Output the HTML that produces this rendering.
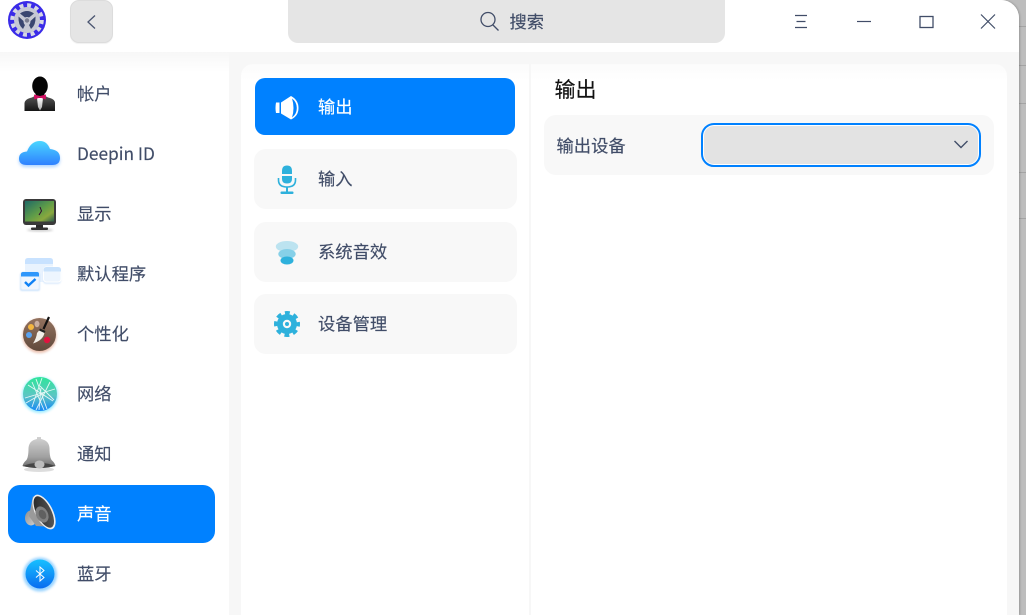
<!DOCTYPE html>
<html lang="zh"><head><meta charset="utf-8"><title>声音</title>
<style>
*{box-sizing:border-box;margin:0;padding:0}
html,body{width:1026px;height:615px;overflow:hidden;background:#bdbdbd}
body{position:relative;font-family:"Noto Sans CJK SC","Liberation Sans",sans-serif;color:#414d68;font-size:17.3px;-webkit-text-stroke:.15px currentColor}
.a{position:absolute}
.t{position:absolute;line-height:24px;white-space:nowrap}
.ln{position:absolute;left:1019px;width:7px;height:1px;background:#a4a4a4}
#win{position:absolute;left:0;top:0;width:1019px;height:615px;background:#f7f7f7;border-top-right-radius:18px;overflow:hidden;box-shadow:1px 0 2px rgba(0,0,0,.2)}
svg{position:absolute;overflow:visible}
.card{position:absolute;background:#f8f8f8;border-radius:12px}
</style></head><body>
<div class="ln" style="top:26px"></div><div class="ln" style="top:65px"></div><div class="ln" style="top:103px"></div><div class="ln" style="top:172px"></div><div class="ln" style="top:218px"></div>
<div id="win">
<div class="a" style="left:0;top:0;width:1019px;height:52px;background:#fff"></div>
<div class="a" style="left:0;top:52px;width:229px;height:563px;background:linear-gradient(#f7f7f7,#fff 20px,#fff)"></div>
<div class="a" style="left:241px;top:64px;width:288px;height:551px;background:linear-gradient(#fbfbfb,#fff 16px);border-radius:12px 0 0 0"></div>
<div class="a" style="left:531px;top:64px;width:476px;height:551px;background:linear-gradient(#fbfbfb,#fff 16px);border-radius:0 12px 0 0"></div>

<!-- app logo -->
<svg style="left:8px;top:1px" width="38" height="38" viewBox="0 0 38 38">
<circle cx="19" cy="19" r="19" fill="#3a2be8"/>
<circle cx="19" cy="19" r="14.8" fill="none" stroke="#d6d7e4" stroke-width="4" stroke-dasharray="4 3.75"/>
<circle cx="19" cy="19" r="13" fill="#c6c8d4"/>
<path d="M12 12.5Q19 7.5 26 12.5L21 16.5Q19 15.5 17 16.5Z" fill="#3a4670"/>
<path d="M10.5 15.5L15.5 20Q15.5 22.5 17 24L15 28Q10 24 10.5 15.5Z" fill="#3a4670"/>
<path d="M27.5 15.5L22.5 20Q22.5 22.5 21 24L23 28Q28 24 27.5 15.5Z" fill="#3a4670"/>
<circle cx="19" cy="19.5" r="2.2" fill="#7a7d90"/>
</svg>

<!-- back -->
<div class="a" style="left:70px;top:0;width:43px;height:43px;background:#e5e5e5;border:1px solid #dcdcdc;border-radius:9px;box-shadow:0 1px 1px rgba(0,0,0,.06)"></div>
<svg style="left:69.5px;top:0" width="43" height="43" fill="none" stroke="#4a5570" stroke-width="1.3"><path d="M25 15.5L18 22L25 28.5"/></svg>

<!-- search -->
<div class="a" style="left:288px;top:-10px;width:437px;height:53px;background:#e5e5e5;border-radius:10px"></div>
<svg style="left:477.5px;top:10px" width="24" height="24" fill="none" stroke="#414d68" stroke-width="1.3"><circle cx="10" cy="9.5" r="7"/><path d="M15 15L20.5 20.5"/></svg>
<div class="t" style="left:509.5px;top:9px">搜索</div>

<!-- window buttons -->
<svg style="left:780px;top:0" width="230" height="44" fill="none" stroke="#414d68" stroke-width="1.2">
<path d="M15 15.5H27M16.5 21.5H25.5M15 27.5H27"/>
<path d="M77 21.5H91"/>
<rect x="140" y="16.5" width="13" height="11" stroke-width="1.3"/>
<path d="M201 14.5L215 28.5M215 14.5L201 28.5"/>
</svg>

<!-- sidebar -->
<div class="a" style="left:8px;top:485px;width:207px;height:58px;background:#0081ff;border-radius:12px"></div>
<div class="t" style="left:77px;top:81px">帐户</div>
<div class="t" style="left:77px;top:141px">Deepin ID</div>
<div class="t" style="left:77px;top:201px">显示</div>
<div class="t" style="left:77px;top:261px">默认程序</div>
<div class="t" style="left:77px;top:321px">个性化</div>
<div class="t" style="left:77px;top:381px">网络</div>
<div class="t" style="left:77px;top:441px">通知</div>
<div class="t" style="left:77px;top:501px;color:#fff">声音</div>
<div class="t" style="left:77px;top:561px">蓝牙</div>

<!-- account -->
<svg style="left:20px;top:74px" width="40" height="40" viewBox="0 0 40 40">
<defs><linearGradient id="su" x1="0" y1="0" x2="0" y2="1"><stop offset="0" stop-color="#5a5a5a"/><stop offset="1" stop-color="#151515"/></linearGradient>
<linearGradient id="sh" x1="0" y1="0" x2="0" y2="1"><stop offset="0" stop-color="#fff"/><stop offset="1" stop-color="#aaa"/></linearGradient></defs>
<path d="M4.5 37V29Q5 25.5 10 24Q14 23 15.5 21H24.5Q26 23 30 24Q35 25.5 35 29V37Z" fill="url(#su)"/>
<ellipse cx="20" cy="12" rx="7.8" ry="9.5" fill="#050505"/><path d="M15 16H25L24 23H16Z" fill="#050505"/>
<path d="M17 24H23L22 33L20 36.5L18 33Z" fill="url(#sh)"/>
<path d="M14 20.5L20 22L26 20.5L25.7 25.5L20 23.5L14.3 25.5Z" fill="#d40e62"/>
</svg>
<!-- cloud -->
<svg style="left:16px;top:136px" width="48" height="36" viewBox="0 0 48 36">
<defs><linearGradient id="cl" x1="0" y1="0" x2="0" y2="1"><stop offset="0" stop-color="#4ad6ff"/><stop offset="1" stop-color="#2f80ff"/></linearGradient>
<filter id="bl"><feGaussianBlur stdDeviation="1.5"/></filter></defs>
<path d="M11 29Q3 29 3 22.5Q3 16 11 15.5Q15 5 24 5Q31 5 34 13Q44 14 44 22Q44 29 36 29Z" fill="#5fa8ff" opacity=".5" filter="url(#bl)" transform="translate(0 2)"/>
<path d="M11 29Q3 29 3 22.5Q3 16 11 15.5Q15 5 24 5Q31 5 34 13Q44 14 44 22Q44 29 36 29Z" fill="url(#cl)"/>
</svg>
<!-- display -->
<svg style="left:20px;top:194px" width="40" height="40" viewBox="0 0 40 40">
<defs><linearGradient id="sc" x1="0" y1="0" x2="1" y2="1"><stop offset="0" stop-color="#1f6a66"/><stop offset=".5" stop-color="#5f9c48"/><stop offset=".75" stop-color="#8aa83e"/><stop offset="1" stop-color="#2c5c4c"/></linearGradient>
<filter id="bs"><feGaussianBlur stdDeviation="1"/></filter></defs>
<ellipse cx="20" cy="36" rx="13" ry="2" fill="#999" opacity=".4" filter="url(#bs)"/>
<rect x="3" y="5" width="33" height="26" rx="3" fill="#3a3a3a"/>
<rect x="5" y="7" width="29" height="20.5" fill="url(#sc)"/>
<path d="M20 13L21.5 17L19 21" stroke="#301030" stroke-width="1" fill="none"/>
<rect x="16" y="31" width="7" height="3" fill="#2b2b2b"/><rect x="11" y="33.5" width="17" height="2.5" rx="1" fill="#333"/>
</svg>
<!-- default apps -->
<svg style="left:18px;top:256px" width="44" height="40" viewBox="0 0 44 40">
<defs><filter id="bd"><feGaussianBlur stdDeviation=".8"/></filter></defs>
<rect x="7" y="2" width="28" height="24" rx="3" fill="#e9f3fe"/><path d="M7 8V5Q7 2 10 2H32Q35 2 35 5V8Z" fill="#c8e2ff"/>
<rect x="25" y="12" width="18" height="16" rx="3" fill="#cfe3fb" opacity=".7" filter="url(#bd)"/>
<rect x="25.5" y="11" width="17.5" height="15" rx="3" fill="#edf5fe" stroke="#fff"/><path d="M25.5 15.5V14Q25.5 11 28.5 11H40Q43 11 43 14V15.5Z" fill="#c9e2fc"/>
<rect x="2" y="17" width="20" height="18" rx="2" fill="#b9d9fb" opacity=".7" filter="url(#bd)"/>
<rect x="3" y="16" width="18" height="17.5" rx="2" fill="#f0f6fe" stroke="#e2eefc"/><path d="M3 20.5V18Q3 16 5 16H19Q21 16 21 18V20.5Z" fill="#2f97fb"/>
<path d="M7 26L10.5 29.5L17.5 23" stroke="#0f81f5" stroke-width="2.4" fill="none"/>
</svg>
<!-- personalize -->
<svg style="left:20px;top:314px" width="40" height="42" viewBox="0 0 40 42">
<defs><linearGradient id="pl" x1="0" y1="0" x2="0" y2="1"><stop offset="0" stop-color="#93725f"/><stop offset="1" stop-color="#614a3c"/></linearGradient>
<filter id="bp"><feGaussianBlur stdDeviation="1.2"/></filter></defs>
<circle cx="19.5" cy="22" r="17" fill="#d98a6a" opacity=".55" filter="url(#bp)"/>
<circle cx="19.5" cy="20.5" r="16.5" fill="url(#pl)"/>
<circle cx="11" cy="13" r="3" fill="#f4b63f"/><ellipse cx="17" cy="10" rx="2.5" ry="3.2" fill="#c9ad9f"/><circle cx="9" cy="21" r="3" fill="#5aa2ef"/><circle cx="27" cy="26" r="3.2" fill="#e0133f"/>
<path d="M29 3L23.5 15" stroke="#111" stroke-width="2.2"/>
<path d="M19.5 16L24.5 18.5Q23.5 26 13 29.5Q16.5 24 17 19Z" fill="#f2efe9"/>
<path d="M20 14.5L25.5 17L24.5 19L19 16.5Z" fill="#222"/>
</svg>
<!-- network -->
<svg style="left:20px;top:374px" width="40" height="40" viewBox="0 0 40 40">
<defs><linearGradient id="nw" x1="0" y1="0" x2="0" y2="1"><stop offset="0" stop-color="#2fe59a"/><stop offset=".55" stop-color="#5cc6c4"/><stop offset="1" stop-color="#1688f5"/></linearGradient>
<filter id="bn"><feGaussianBlur stdDeviation="1.2"/></filter></defs>
<circle cx="20" cy="21" r="18" fill="#5fe0ff" opacity=".6" filter="url(#bn)"/>
<circle cx="20" cy="20" r="17" fill="url(#nw)"/>
<g stroke="#fff" stroke-width=".9" fill="none" opacity=".85"><path d="M16 5L27 35M8 11L33 27M22 4L12 33M5 24L35 15M30 8L16 36M20 12L34 26M12 8L24 36M21 14L19 36M25 18L6 29"/></g>
</svg>
<!-- bell -->
<svg style="left:20px;top:434px" width="40" height="40" viewBox="0 0 40 40">
<defs><linearGradient id="bel" x1="0" y1="0" x2="0" y2="1"><stop offset="0" stop-color="#d2d2d2"/><stop offset=".65" stop-color="#a0a0a0"/><stop offset="1" stop-color="#6a6a6a"/></linearGradient></defs>
<ellipse cx="19" cy="35.5" rx="15" ry="2.5" fill="#bbb" opacity=".5"/>
<path d="M2.5 32Q3.5 28.5 6 26.5Q8.5 24 8.5 14Q9 6.5 17 5V3H21V5Q29 6.5 29.5 14Q29.5 24 32 26.5Q34.5 28.5 35.5 32Q19 36 2.5 32Z" fill="url(#bel)"/>
<path d="M2.5 32Q19 25.5 35.5 32Q19 36 2.5 32Z" fill="#464646"/>
<ellipse cx="19.5" cy="30.5" rx="5" ry="4" fill="#bdbdbd"/>
</svg>
<!-- speaker -->
<svg style="left:20px;top:492px" width="40" height="44" viewBox="0 0 40 44">
<defs><linearGradient id="sp" x1="0" y1="0" x2="1" y2="1"><stop offset="0" stop-color="#222"/><stop offset="1" stop-color="#5e5e5e"/></linearGradient>
<linearGradient id="sb" x1="0" y1="0" x2="1" y2="1"><stop offset="0" stop-color="#8e8e8e"/><stop offset="1" stop-color="#d4d4d4"/></linearGradient></defs>
<ellipse cx="11" cy="26" rx="6" ry="7.5" fill="url(#sb)"/>
<path d="M13 4L9 24L16 34L34 35Z" fill="#9a9a9a"/>
<ellipse cx="24" cy="20" rx="8.8" ry="19" transform="rotate(-27 24 20)" fill="#eee"/>
<ellipse cx="23.8" cy="20" rx="7.4" ry="17.2" transform="rotate(-27 23.8 20)" fill="url(#sp)"/>
<ellipse cx="22" cy="22.5" rx="6" ry="8.5" transform="rotate(-27 22 22.5)" fill="#808080"/>
<ellipse cx="22.5" cy="22.5" rx="3.5" ry="5" transform="rotate(-27 22.5 22.5)" fill="#606060"/>
</svg>
<!-- bluetooth -->
<svg style="left:20px;top:554px" width="40" height="40" viewBox="0 0 40 40">
<defs><linearGradient id="bt" x1="0" y1="0" x2="0" y2="1"><stop offset="0" stop-color="#17c0ff"/><stop offset="1" stop-color="#0a6cf0"/></linearGradient>
<filter id="bb"><feGaussianBlur stdDeviation="1.4"/></filter></defs>
<circle cx="20" cy="20.5" r="17" fill="#59b8ff" opacity=".6" filter="url(#bb)"/>
<circle cx="20" cy="20" r="14.5" fill="url(#bt)"/>
<path d="M16 16.5L24 23.5L20 27V13L24 16.5L16 23.5" fill="none" stroke="#fff" stroke-width="1"/>
</svg>

<!-- middle list -->
<div class="a" style="left:255px;top:78px;width:260px;height:57px;background:#0081ff;border-radius:10px"></div>
<div class="card" style="left:254px;top:149px;width:263px;height:60px"></div>
<div class="card" style="left:254px;top:222px;width:263px;height:60px"></div>
<div class="card" style="left:254px;top:294px;width:263px;height:60px"></div>
<div class="t" style="left:318px;top:94px;color:#fff">输出</div>
<div class="t" style="left:318px;top:166px">输入</div>
<div class="t" style="left:318px;top:239px">系统音效</div>
<div class="t" style="left:318px;top:311px">设备管理</div>

<svg style="left:273px;top:94px" width="28" height="28" viewBox="0 0 28 28">
<path d="M3 8.5H6.5V19H3Q2 14 3 8.5Z" fill="#fff"/>
<path d="M8 8.5L18 2Q25.5 6 25.5 14Q25.5 22 18 25.5L8 19.5Z" fill="#fff"/>
<path d="M19 4.5Q23.8 8 23.8 14Q23.8 20 19 23.5Q20.5 19 20.5 14Q20.5 9 19 4.5Z" fill="#0081ff"/>
</svg>
<svg style="left:275px;top:164px" width="24" height="32" viewBox="0 0 24 32" fill="#2eb1dc">
<path d="M7 7Q7 1.5 12 1.5Q17 1.5 17 7V10H7ZM7 12H17V15Q17 19.5 12 19.5Q7 19.5 7 15Z"/>
<path d="M3.5 14V16Q3.5 23 12 23Q20.5 23 20.5 16V14" fill="none" stroke="#2eb1dc" stroke-width="1.6"/>
<rect x="11" y="23" width="2" height="5"/><rect x="5.5" y="27.5" width="13" height="2.5" rx="1"/>
</svg>
<svg style="left:275px;top:240px" width="24" height="26" viewBox="0 0 24 26">
<ellipse cx="12" cy="6.5" rx="11.2" ry="5.5" fill="#bce3f0"/>
<ellipse cx="12" cy="14" rx="8.7" ry="5" fill="#86d0e8"/>
<ellipse cx="12" cy="20.5" rx="6.5" ry="4" fill="#2eb1dc"/>
</svg>
<svg style="left:274px;top:311px" width="26" height="26" viewBox="0 0 26 26">
<circle cx="13" cy="13" r="10" fill="#2eb1dc"/>
<circle cx="13" cy="13" r="11" fill="none" stroke="#2eb1dc" stroke-width="4" stroke-dasharray="4.8 3.84" stroke-dashoffset="2.4"/>
<circle cx="13" cy="13" r="4.2" fill="#f8f8f8"/>
<circle cx="13" cy="13" r="2" fill="#2eb1dc"/>
</svg>

<!-- right content -->
<div class="t" style="left:554.5px;top:76px;font-size:21px;line-height:26px;color:#111">输出</div>
<div class="card" style="left:544px;top:115px;width:450px;height:60px"></div>
<div class="t" style="left:556.5px;top:133px;color:#414d68">输出设备</div>
<div class="a" style="left:701px;top:123px;width:280px;height:44px;border:2px solid #0081ff;border-radius:13px;background:#fff;padding:1px">
<div style="width:100%;height:100%;background:#e3e3e3;border-radius:10px"></div></div>
<svg style="left:950px;top:136px" width="22" height="16" fill="none" stroke="#414d68" stroke-width="1.4"><path d="M4.5 5L11 11.5L17.5 5"/></svg>
</div>
</body></html>
